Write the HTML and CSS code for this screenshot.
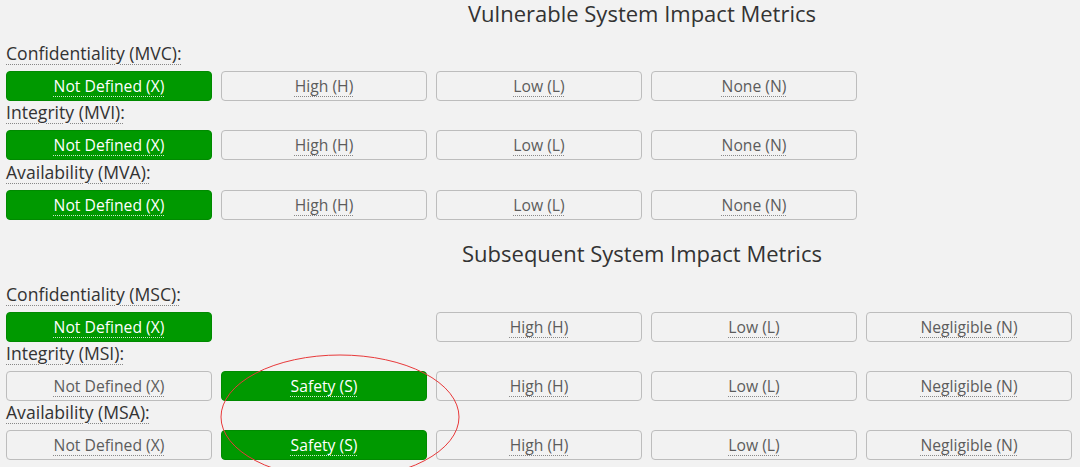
FILE: index.html
```html
<!DOCTYPE html>
<html>
<head>
<meta charset="utf-8">
<link rel="stylesheet" href="styles.css">
</head>
<body>
<div class="page">
  <h2 class="section-title">Vulnerable System Impact Metrics</h2>

  <div class="metric">
    <div class="metric-label"><span class="abbr">Confidentiality (MVC):</span></div>
    <div class="options">
      <div class="btn selected"><span class="abbr">Not Defined (X)</span></div>
      <div class="btn"><span class="abbr">High (H)</span></div>
      <div class="btn"><span class="abbr">Low (L)</span></div>
      <div class="btn"><span class="abbr">None (N)</span></div>
    </div>
  </div>
  <div class="metric tall">
    <div class="metric-label"><span class="abbr">Integrity (MVI):</span></div>
    <div class="options">
      <div class="btn selected"><span class="abbr">Not Defined (X)</span></div>
      <div class="btn"><span class="abbr">High (H)</span></div>
      <div class="btn"><span class="abbr">Low (L)</span></div>
      <div class="btn"><span class="abbr">None (N)</span></div>
    </div>
  </div>
  <div class="metric">
    <div class="metric-label"><span class="abbr">Availability (MVA):</span></div>
    <div class="options">
      <div class="btn selected"><span class="abbr">Not Defined (X)</span></div>
      <div class="btn"><span class="abbr">High (H)</span></div>
      <div class="btn"><span class="abbr">Low (L)</span></div>
      <div class="btn"><span class="abbr">None (N)</span></div>
    </div>
  </div>

  <h2 class="section-title second">Subsequent System Impact Metrics</h2>

  <div class="metric">
    <div class="metric-label"><span class="abbr">Confidentiality (MSC):</span></div>
    <div class="options">
      <div class="btn selected"><span class="abbr">Not Defined (X)</span></div>
      <div class="btn hidden"><span class="abbr">Safety (S)</span></div>
      <div class="btn"><span class="abbr">High (H)</span></div>
      <div class="btn"><span class="abbr">Low (L)</span></div>
      <div class="btn"><span class="abbr">Negligible (N)</span></div>
    </div>
  </div>
  <div class="metric">
    <div class="metric-label"><span class="abbr">Integrity (MSI):</span></div>
    <div class="options">
      <div class="btn"><span class="abbr">Not Defined (X)</span></div>
      <div class="btn selected"><span class="abbr">Safety (S)</span></div>
      <div class="btn"><span class="abbr">High (H)</span></div>
      <div class="btn"><span class="abbr">Low (L)</span></div>
      <div class="btn"><span class="abbr">Negligible (N)</span></div>
    </div>
  </div>
  <div class="metric">
    <div class="metric-label"><span class="abbr">Availability (MSA):</span></div>
    <div class="options">
      <div class="btn"><span class="abbr">Not Defined (X)</span></div>
      <div class="btn selected"><span class="abbr">Safety (S)</span></div>
      <div class="btn"><span class="abbr">High (H)</span></div>
      <div class="btn"><span class="abbr">Low (L)</span></div>
      <div class="btn"><span class="abbr">Negligible (N)</span></div>
    </div>
  </div>

  <svg class="annotation" width="260" height="140" viewBox="0 0 260 140">
    <ellipse cx="130" cy="72" rx="119" ry="62" fill="none" stroke="#e8393a" stroke-width="1"/>
  </svg>
</div>
</body>
</html>
```
FILE: styles.css
```css
html, body {
  margin: 0;
  padding: 0;
  background: #f2f2f2;
  overflow: hidden;
}
body {
  width: 1080px;
  height: 467px;
  font-family: "Open Sans", "Noto Sans", sans-serif;
  color: #333;
}
.page {
  position: relative;
  padding-left: 6px;
  width: 1300px;
}
.section-title {
  width: 1272px;
  margin: 0;
  font-weight: normal;
  font-size: 22px;
  line-height: 26px;
  height: 42px;
  text-align: center;
  color: #333;
}
.section-title.second {
  margin-top: 20px;
  height: 43px;
}
.metric {
  height: 59px;
}
.metric.tall {
  height: 60px;
}
.metric-label {
  height: 29px;
  display: flex;
  align-items: flex-end;
  font-size: 17.6px;
  line-height: 22px;
  color: #333;
  box-sizing: border-box;
  padding-bottom: 7px;
  white-space: nowrap;
}
.abbr {
  text-decoration: underline dotted #888;
  text-underline-offset: 4px;
  text-decoration-thickness: 1px;
}
.options {
  display: grid;
  grid-template-columns: repeat(6, 206px);
  column-gap: 9px;
}
.btn {
  height: 30px;
  box-sizing: border-box;
  border: 1px solid #bdbdbd;
  border-radius: 4px;
  background: #f2f2f2;
  color: #5c5c5c;
  font-size: 15.7px;
  display: flex;
  align-items: center;
  justify-content: center;
}
.btn.selected {
  background: #009900;
  border-color: #008a00;
  color: #fff;
}
.btn.selected .abbr {
  text-decoration-color: #cfe9cf;
}
.btn.hidden {
  visibility: hidden;
}
.annotation {
  position: absolute;
  left: 210px;
  top: 345px;
}
```
